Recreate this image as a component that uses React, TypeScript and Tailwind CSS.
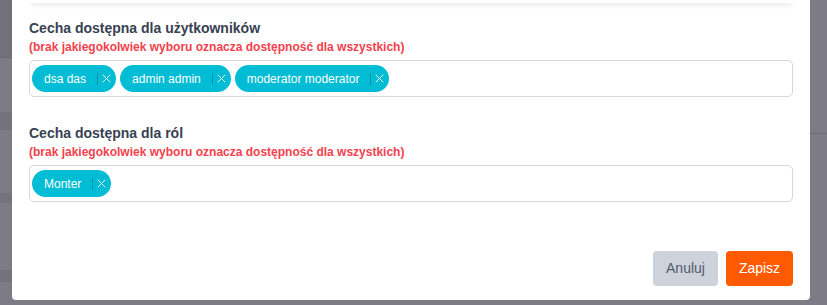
import React from "react";

type Chip = { label: string };

const users: Chip[] = [{ label: "dsa das" }, { label: "admin admin" }, { label: "moderator moderator" }];
const roles: Chip[] = [{ label: "Monter" }];

function Tag({ label }: Chip) {
  return (
    <div className="flex h-[27px] items-center rounded-full bg-[#00bcd4] pl-[12px] pr-[5px] text-[12px] text-white">
      <span className="leading-none">{label}</span>
      <span className="ml-[11px] h-[12px] w-px bg-[#0793a8]" />
      <svg viewBox="0 0 10 10" className="ml-[4px] h-[9px] w-[9px]">
        <path d="M0.8 0.8 L9.2 9.2 M9.2 0.8 L0.8 9.2" stroke="#e6f8fb" strokeWidth="1.1" />
      </svg>
    </div>
  );
}

function Field({ title, chips }: { title: string; chips: Chip[] }) {
  return (
    <div className="flex flex-col">
      <div className="text-[14px] font-bold leading-[18px] text-[#384152]">{title}</div>
      <div className="mt-[3px] text-[12px] font-bold leading-[15px] text-[#f3414d]">
        (brak jakiegokolwiek wyboru oznacza dostępność dla wszystkich)
      </div>
      <div className="mt-[5px] flex h-[37px] items-center gap-[4px] rounded-[5px] border border-[#d6d6dd] px-[2px]">
        {chips.map((c) => (
          <Tag key={c.label} label={c.label} />
        ))}
      </div>
    </div>
  );
}

export default function App() {
  return (
    <div
      className="relative h-[305px] w-[827px] overflow-hidden bg-[#7d7c86]"
      style={{ fontFamily: '"Liberation Sans", Arial, sans-serif' }}
    >
      {/* page behind the overlay */}
      <div className="absolute left-0 top-0 h-[57px] w-[12px] bg-[#72717b]" />
      <div className="absolute left-0 top-[57px] h-px w-[12px] bg-[#6a6972]" />
      <div className="absolute left-0 top-[112px] h-[18px] w-[12px] bg-[#74737d]" />
      <div className="absolute left-0 top-[193px] h-[10px] w-[12px] bg-[#74737d]" />
      <div className="absolute left-0 top-[270px] h-[12px] w-[12px] bg-[#74737d]" />
      <div className="absolute right-0 top-[133px] h-px w-[17px] bg-[#6c6b75]" />

      <div className="relative ml-[12px] flex h-[300px] w-[798px] flex-col rounded-b-[4px] bg-white px-[17px]">
        <div className="mx-[1px] h-[3px] rounded-b-[6px] bg-white shadow-[0_2px_5px_rgba(0,0,0,0.12)]" />
        <div className="mt-[16px] flex flex-col gap-[27px]">
          <Field title="Cecha dostępna dla użytkowników" chips={users} />
          <Field title="Cecha dostępna dla ról" chips={roles} />
        </div>
        <div className="mt-auto mb-[14px] flex justify-end gap-[8px]">
          <button className="h-[35px] w-[65px] rounded-[4px] bg-[#ced2da] text-[14px] text-[#505b6f]">Anuluj</button>
          <button className="h-[35px] w-[67px] rounded-[4px] bg-[#ff5a00] text-[14px] text-white">Zapisz</button>
        </div>
      </div>
    </div>
  );
}
